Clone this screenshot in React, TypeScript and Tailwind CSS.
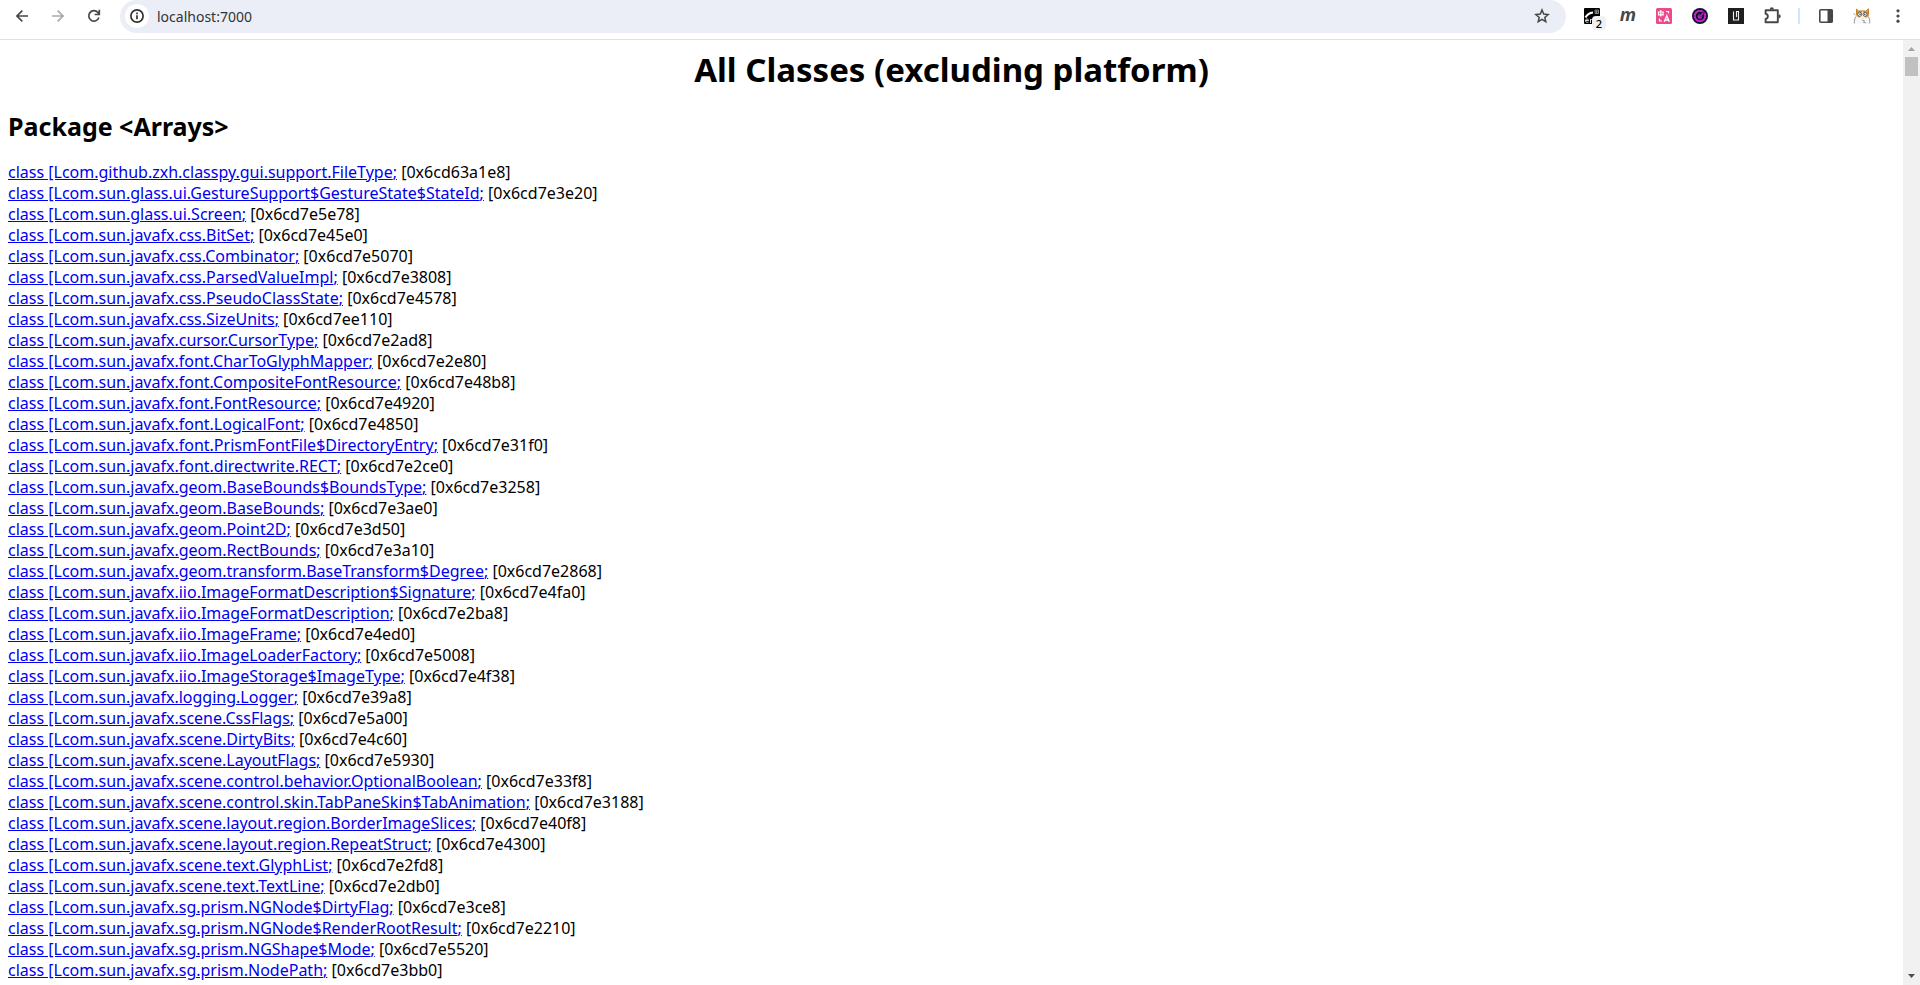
import type { ReactNode } from "react";

const rows: [string, string][] = [
  ["com.github.zxh.classpy.gui.support.FileType", "0x6cd63a1e8"],
  ["com.sun.glass.ui.GestureSupport$GestureState$StateId", "0x6cd7e3e20"],
  ["com.sun.glass.ui.Screen", "0x6cd7e5e78"],
  ["com.sun.javafx.css.BitSet", "0x6cd7e45e0"],
  ["com.sun.javafx.css.Combinator", "0x6cd7e5070"],
  ["com.sun.javafx.css.ParsedValueImpl", "0x6cd7e3808"],
  ["com.sun.javafx.css.PseudoClassState", "0x6cd7e4578"],
  ["com.sun.javafx.css.SizeUnits", "0x6cd7ee110"],
  ["com.sun.javafx.cursor.CursorType", "0x6cd7e2ad8"],
  ["com.sun.javafx.font.CharToGlyphMapper", "0x6cd7e2e80"],
  ["com.sun.javafx.font.CompositeFontResource", "0x6cd7e48b8"],
  ["com.sun.javafx.font.FontResource", "0x6cd7e4920"],
  ["com.sun.javafx.font.LogicalFont", "0x6cd7e4850"],
  ["com.sun.javafx.font.PrismFontFile$DirectoryEntry", "0x6cd7e31f0"],
  ["com.sun.javafx.font.directwrite.RECT", "0x6cd7e2ce0"],
  ["com.sun.javafx.geom.BaseBounds$BoundsType", "0x6cd7e3258"],
  ["com.sun.javafx.geom.BaseBounds", "0x6cd7e3ae0"],
  ["com.sun.javafx.geom.Point2D", "0x6cd7e3d50"],
  ["com.sun.javafx.geom.RectBounds", "0x6cd7e3a10"],
  ["com.sun.javafx.geom.transform.BaseTransform$Degree", "0x6cd7e2868"],
  ["com.sun.javafx.iio.ImageFormatDescription$Signature", "0x6cd7e4fa0"],
  ["com.sun.javafx.iio.ImageFormatDescription", "0x6cd7e2ba8"],
  ["com.sun.javafx.iio.ImageFrame", "0x6cd7e4ed0"],
  ["com.sun.javafx.iio.ImageLoaderFactory", "0x6cd7e5008"],
  ["com.sun.javafx.iio.ImageStorage$ImageType", "0x6cd7e4f38"],
  ["com.sun.javafx.logging.Logger", "0x6cd7e39a8"],
  ["com.sun.javafx.scene.CssFlags", "0x6cd7e5a00"],
  ["com.sun.javafx.scene.DirtyBits", "0x6cd7e4c60"],
  ["com.sun.javafx.scene.LayoutFlags", "0x6cd7e5930"],
  ["com.sun.javafx.scene.control.behavior.OptionalBoolean", "0x6cd7e33f8"],
  ["com.sun.javafx.scene.control.skin.TabPaneSkin$TabAnimation", "0x6cd7e3188"],
  ["com.sun.javafx.scene.layout.region.BorderImageSlices", "0x6cd7e40f8"],
  ["com.sun.javafx.scene.layout.region.RepeatStruct", "0x6cd7e4300"],
  ["com.sun.javafx.scene.text.GlyphList", "0x6cd7e2fd8"],
  ["com.sun.javafx.scene.text.TextLine", "0x6cd7e2db0"],
  ["com.sun.javafx.sg.prism.NGNode$DirtyFlag", "0x6cd7e3ce8"],
  ["com.sun.javafx.sg.prism.NGNode$RenderRootResult", "0x6cd7e2210"],
  ["com.sun.javafx.sg.prism.NGShape$Mode", "0x6cd7e5520"],
  ["com.sun.javafx.sg.prism.NodePath", "0x6cd7e3bb0"],
];

function ToolButton({ label, children }: { label: string; children: ReactNode }) {
  return (
    <button type="button" aria-label={label} className="relative flex h-8 w-9 shrink-0 items-center justify-center text-[#474747]">
      {children}
    </button>
  );
}

function LineIcon({ children }: { children: ReactNode }) {
  return (
    <svg width="16" height="16" viewBox="0 0 16 16" fill="none" stroke="currentColor" strokeWidth="1.7">
      {children}
    </svg>
  );
}

function CaptureIcon() {
  return (
    <svg width="16" height="16" viewBox="0 0 16 16">
      <rect width="16" height="16" rx="1" fill="#000" />
      <path d="M1.5 9.5C3 6.5 5 5 9 4.5" fill="none" stroke="#fff" strokeWidth="2" />
      <path d="M11 2h3.5v3.5H11zM11 3.8h3.5M12.7 2v4" fill="none" stroke="#aaa" strokeWidth=".7" />
      <path d="M1.5 12.5h3c0-2-3-2-3 0s2 2 3 1.5M6.5 15v-4M6.5 12.5q1-1.5 2.5-1" fill="none" stroke="#ddd" strokeWidth="1" />
    </svg>
  );
}

function TranslateIcon() {
  return (
    <svg width="16" height="16" viewBox="0 0 16 16" fill="none" stroke="#fff" strokeWidth="1.2">
      <rect width="16" height="16" rx="1.5" fill="#ea4c89" stroke="none" />
      <path d="M2.5 4h4.6v2.8H2.5zM4.8 2v6.5" />
      <path d="M10 3.5h2.5v2M3.5 10.5v2.5H6" />
      <path d="M8.3 13.8l2.5-6 2.5 6M9.2 12h3.2" strokeWidth="1.4" />
    </svg>
  );
}

function GaugeIcon() {
  return (
    <svg width="16" height="16" viewBox="0 0 16 16">
      <circle cx="8" cy="8" r="8" fill="#0b1420" />
      <circle cx="8" cy="8" r="5.2" fill="none" stroke="#c61fd6" strokeWidth="2" />
      <circle cx="8" cy="8.5" r="2.3" fill="#c61fd6" />
      <path d="M8 8.5l4-4.5" stroke="#0b1420" strokeWidth="2.4" />
      <path d="M8 8.5l3.5-4" stroke="#c61fd6" strokeWidth="1.3" />
    </svg>
  );
}

function BlockIcon() {
  return (
    <svg width="16" height="16" viewBox="0 0 16 16">
      <rect width="16" height="16" fill="#1f1f1f" />
      <path d="M5.5 3.5v8.5h5V3.5H8.5v5.5" fill="none" stroke="#f1f1f1" strokeWidth="1.1" />
    </svg>
  );
}

function PuzzleIcon() {
  return (
    <svg width="20" height="20" viewBox="0 0 20 20">
      <path
        d="M4 4.3h11.8v12H3.6v-3.4c3-.5 3-4.7 0-5.2V4.3z"
        fill="none" stroke="#474747" strokeWidth="1.9" strokeLinejoin="round"
      />
      <path d="M7.7 3.6a2.1 2.3 0 0 1 4.2 0zM16.5 8.2a2.3 2.1 0 0 1 0 4.2z" fill="#474747" />
    </svg>
  );
}

function CatIcon() {
  return (
    <svg width="18" height="18" viewBox="0 0 18 18">
      <path d="M3 8.5C1.5 11 1 14 1.5 17h15c.5-3 0-6-1.5-8.5z" fill="#f8f8f8" />
      <path d="M3.3 1.5l3 2.3h6L15.7 1l.5 7c-1 2.3-3 3.2-6.5 3.2S3.8 10 3 8z" fill="#dd9838" />
      <path d="M9 4h1.2L12.5 11.2H6.5z" fill="#f5efe5" />
      <path d="M3.5 2v5M6 4h6M15.5 2v5" fill="none" stroke="#a87432" strokeWidth=".8" />
      <circle cx="6.7" cy="7.3" r="2" fill="#fff" stroke="#554" strokeWidth=".9" />
      <circle cx="12" cy="7.3" r="2" fill="#fff" stroke="#554" strokeWidth=".9" />
      <circle cx="7" cy="7.3" r=".8" fill="#333" />
      <circle cx="11.7" cy="7.3" r=".8" fill="#333" />
      <path d="M3 9.5C1.5 12 1 14 1.3 16.5M15.3 9.5c1.5 2.5 1.7 4.5 1.4 7M.5 6.5l2 1.5M9 13l3 1.2M10 15l3 1" fill="none" stroke="#999" strokeWidth="1" />
    </svg>
  );
}

function Toolbar() {
  return (
    <header className="flex h-10 shrink-0 items-start border-b border-[#dfe1e3] bg-white px-1">
      <ToolButton label="Back">
        <LineIcon><path d="M14 8H3.500M8.300 2.600L2.900 8l5.400 5.400" /></LineIcon>
      </ToolButton>
      <ToolButton label="Forward">
        <span className="text-[#ababab]">
          <LineIcon><path d="M2 8h10.500M7.700 2.600L13.100 8l-5.400 5.400" /></LineIcon>
        </span>
      </ToolButton>
      <ToolButton label="Reload">
        <LineIcon><path d="M12.900 9.500A5.200 5.200 0 1 1 11.900 4.500L13 6M13.300 1.800v4.700H8.600" /></LineIcon>
      </ToolButton>
      <div className="mx-2 flex h-[33px] min-w-0 flex-1 items-start rounded-full bg-[#ebeef7] pl-[5px]">
        <button type="button" aria-label="Site information" className="mt-1 flex size-6 shrink-0 items-center justify-center rounded-full bg-white text-[#303030]">
          <LineIcon><circle cx="8" cy="8" r="6.100" /><path d="M8 7.200v4.100M8 4.600v1.600" /></LineIcon>
        </button>
        <input
          aria-label="Address"
          defaultValue="localhost:7000"
          className="ml-2 h-8 min-w-0 flex-1 bg-transparent text-sm text-[#333] outline-none"
        />
        <button type="button" aria-label="Bookmark this page" className="mr-[6px] flex h-8 w-9 shrink-0 items-center justify-center text-[#474747]">
          <LineIcon>
            <path d="M8 2l1.700 4.100 4.400.4-3.300 2.900 1 4.300L8 11.400l-3.800 2.300 1-4.300L1.900 6.500l4.400-.4z" strokeWidth="1.500" />
          </LineIcon>
        </button>
      </div>
      <ToolButton label="Capture extension">
        <CaptureIcon />
        <span className="absolute top-4 left-[18px] flex size-[14px] items-center justify-center rounded-sm bg-[#f1f1f1] text-[11px] leading-none font-medium text-black">2</span>
      </ToolButton>
      <ToolButton label="Markdown extension">
        <span className="pb-1 text-lg leading-7 font-bold italic">m</span>
      </ToolButton>
      <ToolButton label="Translate extension"><TranslateIcon /></ToolButton>
      <ToolButton label="Gauge extension"><GaugeIcon /></ToolButton>
      <ToolButton label="Block extension"><BlockIcon /></ToolButton>
      <ToolButton label="Extensions"><PuzzleIcon /></ToolButton>
      <div className="flex h-8 w-[18px] shrink-0 items-center justify-center">
        <span className="h-4 w-[2px] bg-[#d3e3fd]" />
      </div>
      <ToolButton label="Side panel">
        <svg width="16" height="16" viewBox="0 0 16 16">
          <rect x="1.8" y="1.8" width="12.4" height="12.4" rx="1" fill="none" stroke="#474747" strokeWidth="1.6" />
          <path d="M9.5 1.5h5v13h-5z" fill="#474747" />
        </svg>
      </ToolButton>
      <ToolButton label="Profile"><CatIcon /></ToolButton>
      <ToolButton label="Menu">
        <svg width="16" height="16" viewBox="0 0 16 16" fill="#474747">
          <circle cx="8" cy="2.8" r="1.6" />
          <circle cx="8" cy="8" r="1.6" />
          <circle cx="8" cy="13.2" r="1.6" />
        </svg>
      </ToolButton>
    </header>
  );
}

function Scrollbar() {
  return (
    <div aria-hidden="true" className="flex w-[17px] shrink-0 flex-col items-center bg-[#f1f1f1]">
      <svg width="17" height="17" viewBox="0 0 17 17"><path d="M5 11l3.5-4 3.5 4z" fill="#a3a3a3" /></svg>
      <div className="h-[19px] w-[13px] bg-[#c1c1c1]" />
      <svg className="mt-auto" width="17" height="17" viewBox="0 0 17 17"><path d="M5 6l3.5 4L12 6z" fill="#505050" /></svg>
    </div>
  );
}

export default function App() {
  return (
    <div className="flex h-screen flex-col overflow-hidden bg-white font-['Noto_Sans',sans-serif] text-black">
      <Toolbar />
      <div className="flex min-h-0 flex-1">
        <main className="min-w-0 flex-1 overflow-hidden px-2 pt-2">
          <h1 className="text-center text-[33px] leading-[43px] font-bold">All Classes (excluding platform)</h1>
          <h2 className="my-5 text-[25px] leading-[31px] font-bold">Package &lt;Arrays&gt;</h2>
          <ul className="text-base leading-[21px]">
            {rows.map(([name, id]) => (
              <li key={name}>
                <a className="text-[#0000ee] underline" href={`#${id}`}>class [L{name};</a> [{id}]
              </li>
            ))}
          </ul>
        </main>
        <Scrollbar />
      </div>
    </div>
  );
}
